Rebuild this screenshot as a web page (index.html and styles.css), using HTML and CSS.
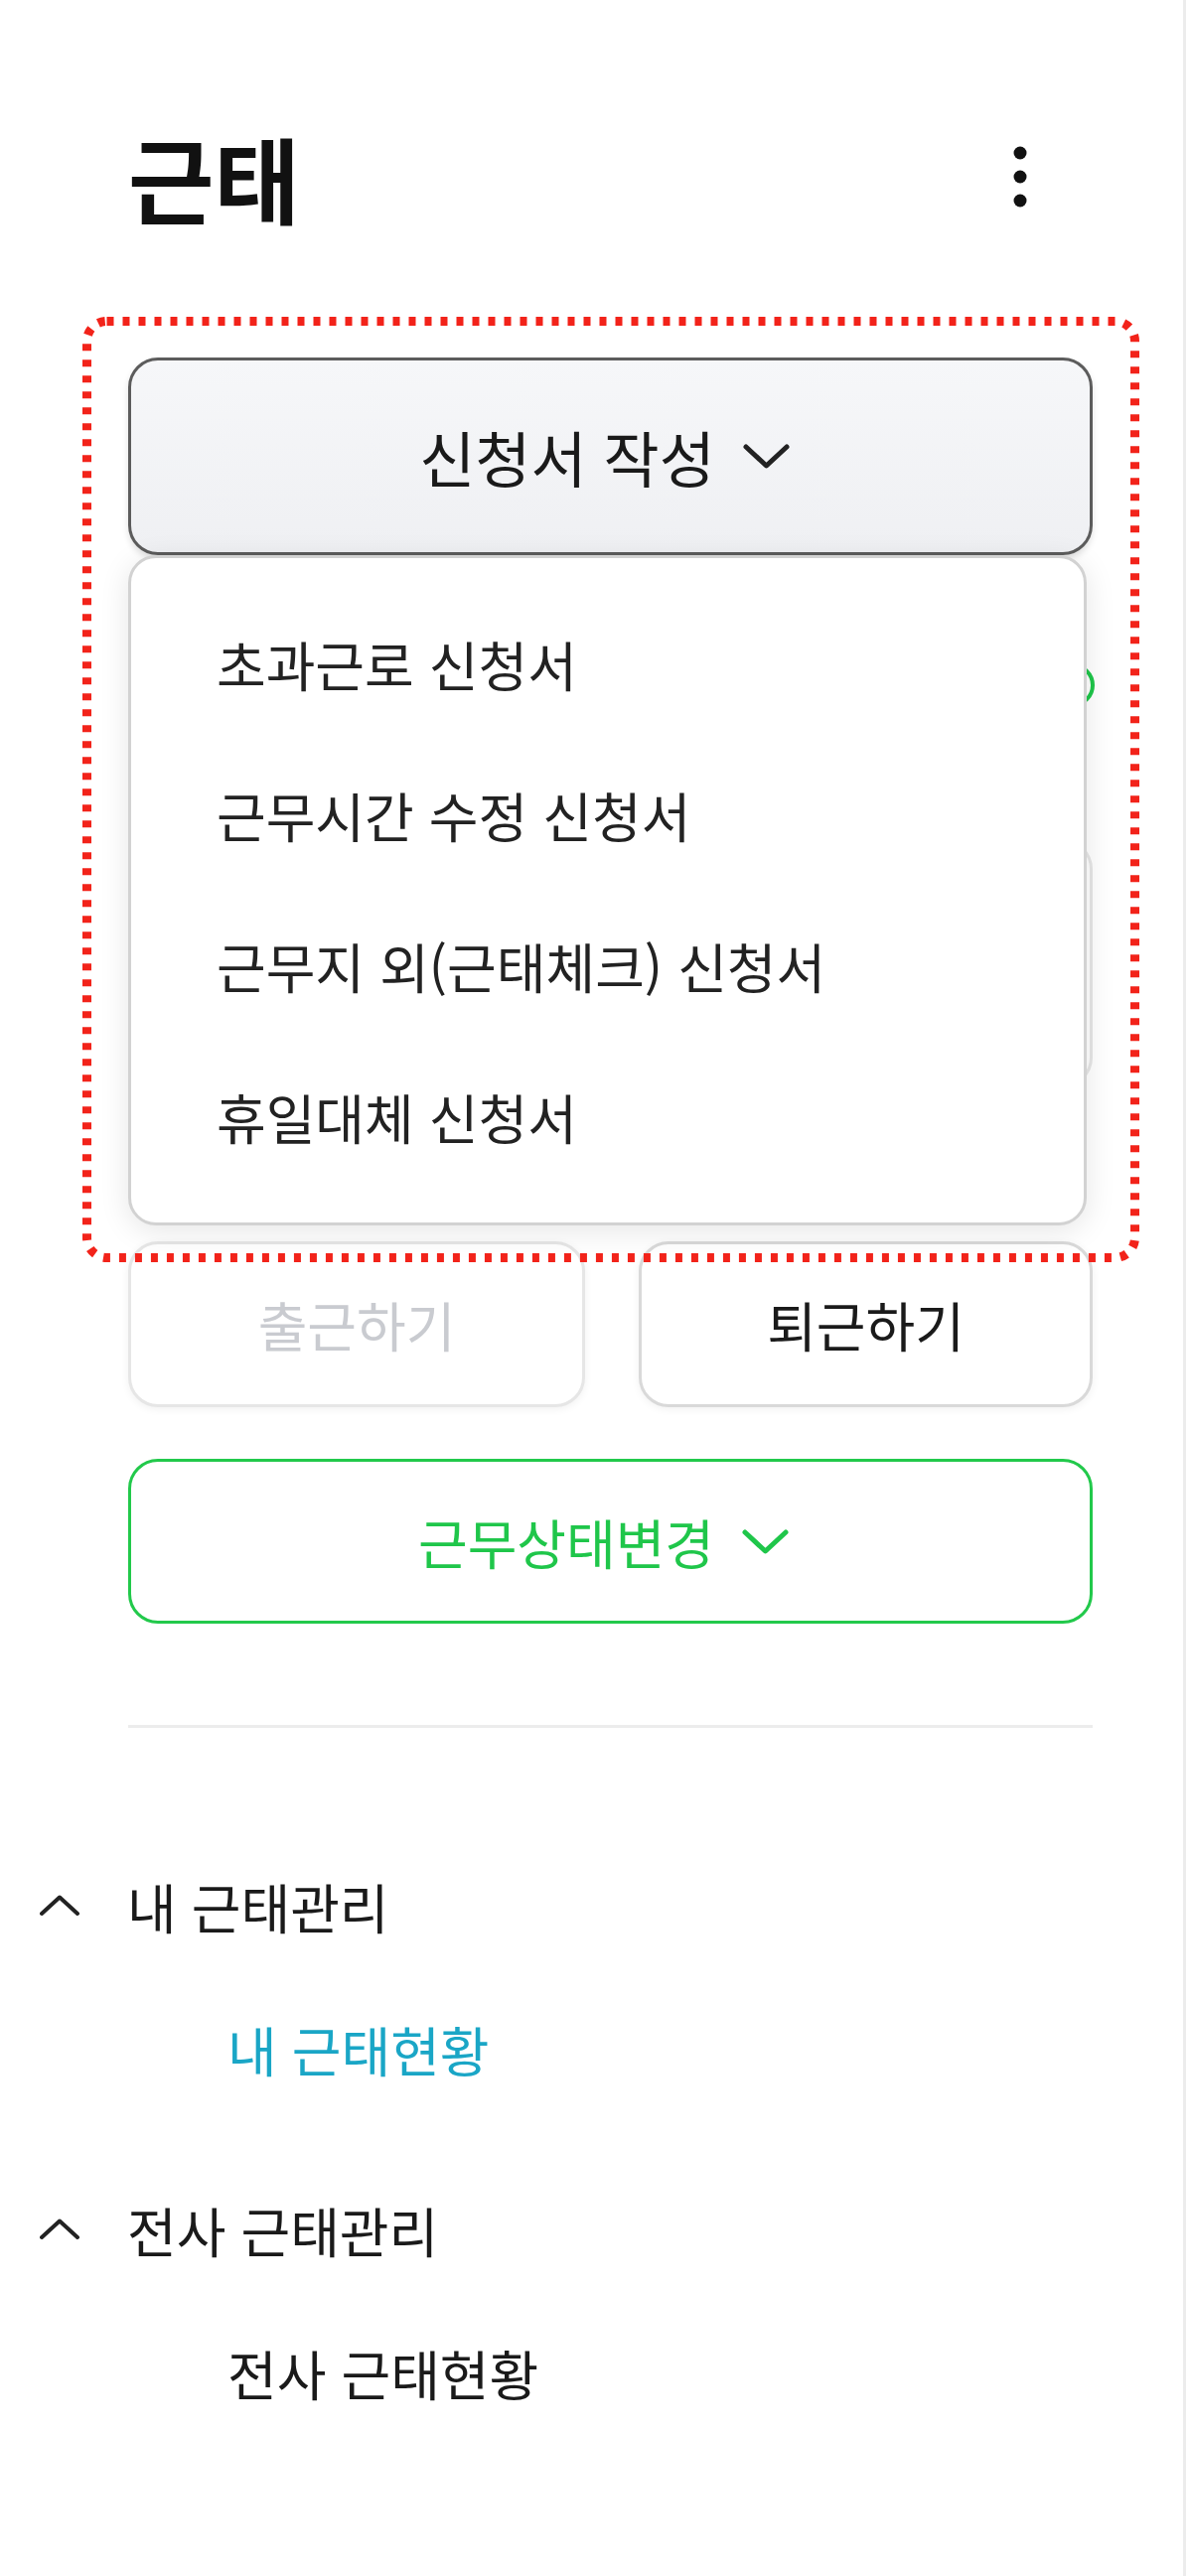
FILE: index.html
```html
<!DOCTYPE html>
<html lang="ko">
<head>
  <meta charset="UTF-8">
  <meta name="viewport" content="width=device-width, initial-scale=1.0">
  <title>근태</title>
  <link rel="stylesheet" href="styles.css">
</head>
<body>
  <div class="sidebar">
    <div class="header">
      <h1 class="title">근태</h1>
      <div class="kebab">
        <svg width="40" height="72" viewBox="0 0 40 72">
          <circle cx="20" cy="12" r="6.5" fill="#111"/>
          <circle cx="20" cy="36" r="6.5" fill="#111"/>
          <circle cx="20" cy="60" r="6.5" fill="#111"/>
        </svg>
      </div>
    </div>

    <div class="apply-wrap">
      <button class="apply-btn">
        <span>신청서 작성</span>
        <svg class="chevron" width="47" height="25" viewBox="0 0 47 25">
          <path d="M3 3 L23.5 22 L44 3" fill="none" stroke="#222" stroke-width="5" stroke-linecap="round" stroke-linejoin="round"/>
        </svg>
      </button>

      <ul class="apply-menu">
        <li>초과근로 신청서</li>
        <li>근무시간 수정 신청서</li>
        <li>근무지 외(근태체크) 신청서</li>
        <li>휴일대체 신청서</li>
      </ul>
    </div>

    <!-- covered by the open menu -->
    <div class="status-row">
      <span class="status-dot"></span>
    </div>
    <div class="summary-card"></div>

    <div class="clock-row">
      <button class="clock-btn disabled">출근하기</button>
      <button class="clock-btn">퇴근하기</button>
    </div>

    <button class="state-btn">
      <span>근무상태변경</span>
      <svg class="chevron" width="47" height="25" viewBox="0 0 47 25">
        <path d="M3 3 L23.5 22 L44 3" fill="none" stroke="#1fc64a" stroke-width="5" stroke-linecap="round" stroke-linejoin="round"/>
      </svg>
    </button>

    <div class="divider"></div>

    <nav class="nav">
      <div class="nav-group">
        <svg width="40" height="22" viewBox="0 0 40 22">
          <path d="M2 19 L20 2.5 L38 19" fill="none" stroke="#222" stroke-width="4" stroke-linecap="round" stroke-linejoin="round"/>
        </svg>
        <span>내 근태관리</span>
      </div>
      <div class="nav-item active">내 근태현황</div>

      <div class="nav-group second">
        <svg width="40" height="22" viewBox="0 0 40 22">
          <path d="M2 19 L20 2.5 L38 19" fill="none" stroke="#222" stroke-width="4" stroke-linecap="round" stroke-linejoin="round"/>
        </svg>
        <span>전사 근태관리</span>
      </div>
      <div class="nav-item">전사 근태현황</div>
    </nav>

    <svg class="highlight" width="1064" height="952" viewBox="0 0 1064 952">
      <rect x="4.5" y="4.5" width="1055" height="943" rx="20" fill="none" stroke="#f2231a" stroke-width="9" stroke-dasharray="7 9"/>
    </svg>
  </div>
</body>
</html>
```

FILE: styles.css
```css
body {
  margin: 0;
  background: #ffffff;
  color: #222222;
  font-family: "Noto Sans CJK KR", "Noto Sans", sans-serif;
}

.sidebar {
  position: relative;
  box-sizing: border-box;
  width: 1194px;
  min-height: 2594px;
  padding: 0 91px 0 129px;
  border-right: 3px solid #ececec;
}

.header {
  display: flex;
  justify-content: space-between;
  align-items: center;
  height: 116px;
  padding-top: 120px;
}

.title {
  margin: 0;
  font-size: 94px;
  font-weight: 700;
  line-height: 1;
  color: #111111;
}

.kebab {
  display: flex;
  margin-right: 53px;
}

button {
  font-family: inherit;
  cursor: pointer;
}

.chevron {
  flex: none;
}

.apply-wrap {
  position: relative;
  margin-top: 124px;
  z-index: 2;
}

.apply-btn {
  display: flex;
  justify-content: center;
  align-items: center;
  gap: 28px;
  box-sizing: border-box;
  width: 100%;
  height: 199px;
  padding: 0 12px 0 0;
  border: 3px solid #5c5c5c;
  border-radius: 30px;
  background: linear-gradient(#f6f7f9, #eff0f3);
  box-shadow: 0 4px 6px rgba(0, 0, 0, 0.12);
  color: #1a1a1a;
  font-size: 61px;
  font-weight: 400;
}

.apply-menu {
  position: absolute;
  top: 100%;
  left: 0;
  right: 6px;
  box-sizing: border-box;
  height: 675px;
  margin: 0;
  padding: 30px 0 36px;
  list-style: none;
  background: #ffffff;
  border: 3px solid #d2d2d2;
  border-radius: 28px;
  box-shadow: 0 6px 30px rgba(0, 0, 0, 0.10);
}

.apply-menu li {
  display: flex;
  align-items: center;
  height: 152px;
  padding-left: 86px;
  font-size: 54px;
  color: #222222;
}

.status-row {
  display: flex;
  justify-content: flex-end;
  margin-top: 111px;
  height: 40px;
}

.status-dot {
  box-sizing: border-box;
  width: 44px;
  height: 44px;
  margin: -2px -2px 0 0;
  border: 4px solid #1fc64a;
  border-radius: 50%;
}

.summary-card {
  box-sizing: border-box;
  height: 250px;
  margin-top: 135px;
  border: 3px solid #e6e6e6;
  border-radius: 30px;
}

.clock-row {
  display: grid;
  grid-template-columns: 460px 1fr;
  gap: 54px;
  margin-top: 155px;
}

.clock-btn {
  box-sizing: border-box;
  height: 167px;
  border: 3px solid #d9d9d9;
  border-radius: 30px;
  background: #ffffff;
  box-shadow: 0 2px 8px rgba(0, 0, 0, 0.06);
  color: #1a1a1a;
  font-size: 54px;
  font-weight: 400;
}

.clock-btn.disabled {
  border-color: #e6e6e6;
  color: #c9cbd0;
}

.state-btn {
  display: flex;
  justify-content: center;
  align-items: center;
  gap: 28px;
  box-sizing: border-box;
  width: 100%;
  height: 166px;
  margin-top: 52px;
  padding: 0 14px 0 0;
  border: 3px solid #22c94b;
  border-radius: 30px;
  background: #ffffff;
  color: #1fc64a;
  font-size: 54px;
  font-weight: 400;
}

.divider {
  height: 3px;
  margin-top: 102px;
  background: #ececec;
}

.nav {
  margin: 134px 0 0 -89px;
}

.nav-group {
  display: flex;
  align-items: center;
  gap: 48px;
  height: 90px;
  font-size: 54px;
  color: #1a1a1a;
}

.nav-group.second {
  margin-top: 92px;
}

.nav-item {
  display: flex;
  align-items: center;
  height: 90px;
  margin-top: 54px;
  padding-left: 189px;
  font-size: 54px;
  color: #1a1a1a;
}

.nav-item.active {
  color: #1aa6c6;
}

.highlight {
  position: absolute;
  top: 319px;
  left: 83px;
  z-index: 5;
  pointer-events: none;
}
```
